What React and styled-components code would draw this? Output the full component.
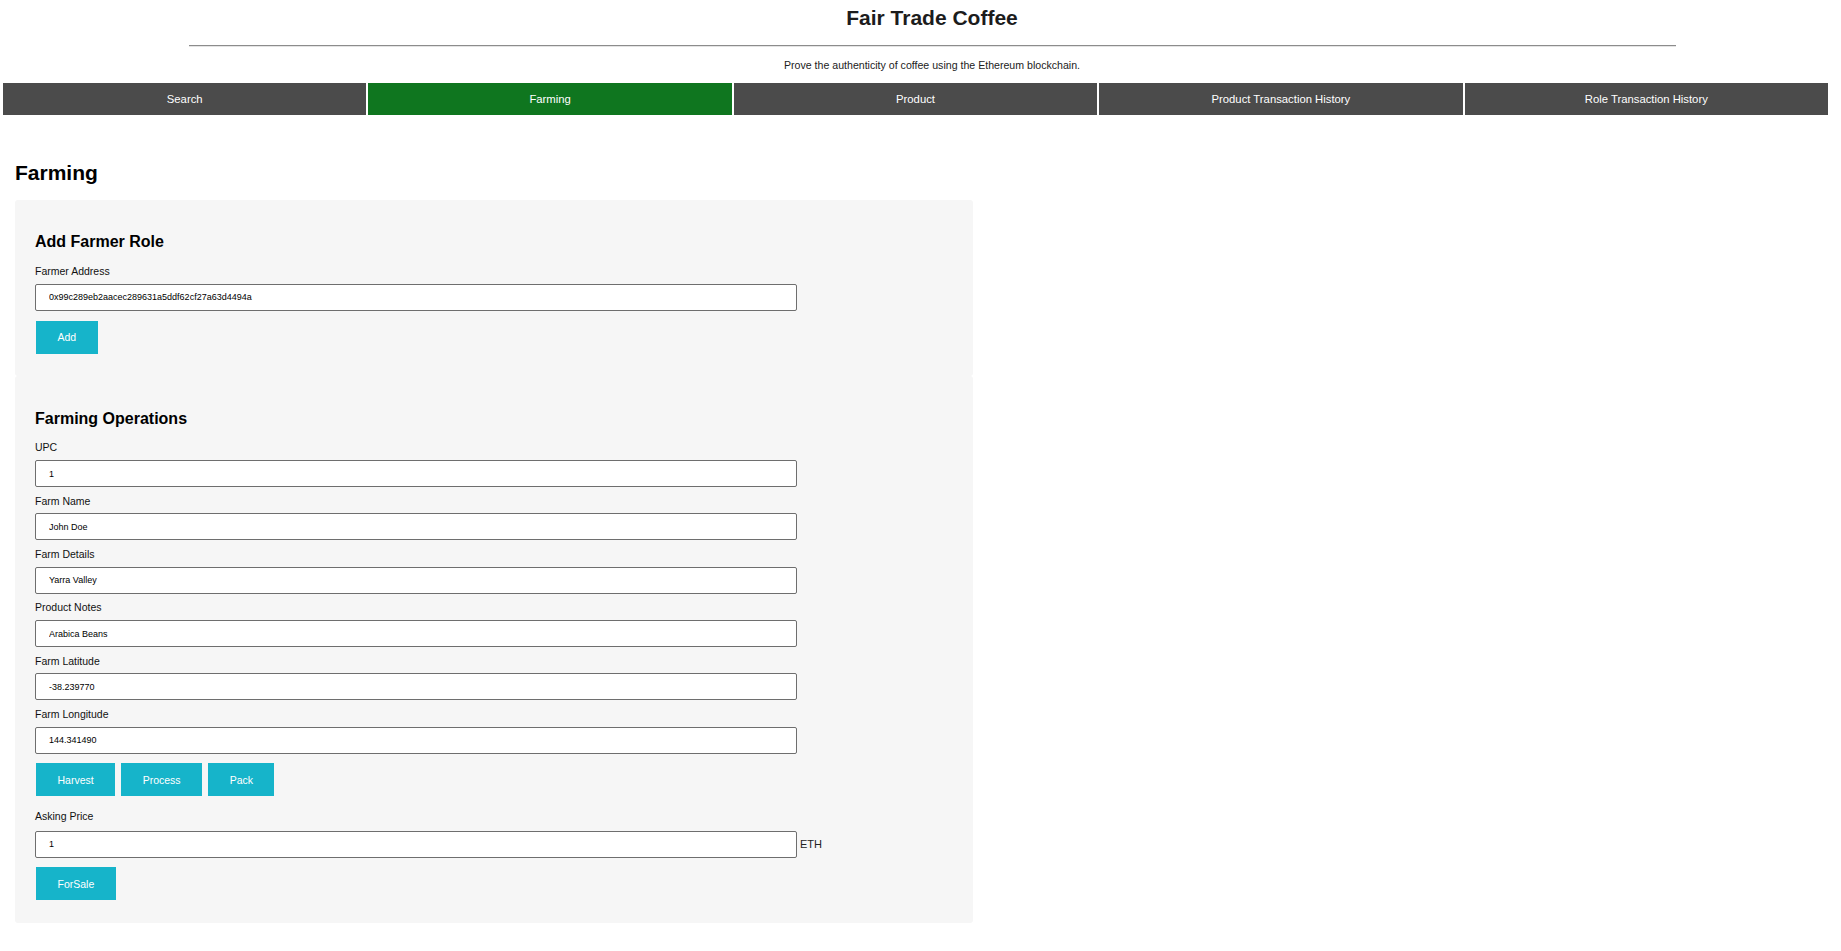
import React from "react";
import styled, { createGlobalStyle } from "styled-components";

const GlobalStyle = createGlobalStyle`
  * {
    box-sizing: border-box;
  }
  body {
    margin: 0;
    background: #fff;
    color: #111;
    font-family: "Liberation Sans", Arial, Helvetica, sans-serif;
  }
`;

const StyledHeader = styled.header`
  padding: 6px 0 0 23px;
  text-align: center;
`;

const StyledTitle = styled.h1`
  margin: 0;
  font-size: 21px;
  line-height: 24px;
  font-weight: 700;
  color: #1c1c1c;
`;

const StyledRule = styled.hr`
  width: 1487px;
  height: 0;
  margin: 15px auto 0;
  border: 0;
  border-top: 1px solid #8c8c8c;
  border-bottom: 1px solid #e4e4e4;
`;

const StyledTagline = styled.p`
  margin: 11.6px 0 0;
  font-size: 10.6px;
  line-height: 12px;
  color: #222;
`;

const StyledNav = styled.nav`
  display: grid;
  grid-template-columns: repeat(5, 1fr);
  gap: 2px;
  width: 1825px;
  margin: 12px 0 0 3px;
`;

const StyledTab = styled.div`
  height: 32.4px;
  display: flex;
  align-items: center;
  justify-content: center;
  font-size: 11.3px;
  color: #fff;
  background-color: ${({ $active }) => ($active ? "#0f761f" : "#4b4b4b")};
`;

const StyledMain = styled.main`
  padding-left: 15px;
`;

const StyledPageTitle = styled.h2`
  margin: 45.7px 0 15.3px;
  font-size: 21px;
  line-height: 24px;
  font-weight: 700;
  color: #000;
`;

const StyledPanel = styled.section`
  width: 958px;
  display: flex;
  flex-direction: column;
  align-items: flex-start;
  padding: 33.5px 20px 22.5px;
  background: #f6f6f6;
  border-radius: 3px;
`;

const StyledPanelTitle = styled.h3`
  margin: 0 0 5.8px;
  font-size: 16px;
  line-height: 18.4px;
  font-weight: 700;
  color: #000;
`;

const StyledField = styled.div`
  display: flex;
  flex-direction: column;
  align-items: flex-start;
  margin-top: ${({ $loose }) => ($loose ? "14.1px" : "7.5px")};
`;

const StyledLabel = styled.label`
  display: block;
  margin-bottom: ${({ $loose }) => ($loose ? "8.2px" : "6.8px")};
  font-size: 10.5px;
  line-height: 12px;
  color: #111;
`;

const StyledInputRow = styled.div`
  display: flex;
  align-items: center;
`;

const StyledInput = styled.input`
  width: 762px;
  height: 27px;
  padding: 0 13px;
  border: 1px solid #6e6e6e;
  border-radius: 2px;
  background: #fff;
  font-family: inherit;
  font-size: 9px;
  color: #000;
  outline: none;
`;

const StyledUnit = styled.span`
  margin-left: 3px;
  font-size: 11px;
  color: #222;
`;

const StyledButtonRow = styled.div`
  display: flex;
  gap: 6px;
  margin: 9.7px 0 0 1px;
`;

const StyledButton = styled.button`
  height: 33px;
  padding: 0 21.5px;
  border: 0;
  border-radius: 0;
  background: #16b4ca;
  color: #fff;
  font-family: inherit;
  font-size: 10.5px;
  cursor: pointer;
`;

const tabs = [
  "Search",
  "Farming",
  "Product",
  "Product Transaction History",
  "Role Transaction History"
];

const farmFields = [
  ["UPC", "1"],
  ["Farm Name", "John Doe"],
  ["Farm Details", "Yarra Valley"],
  ["Product Notes", "Arabica Beans"],
  ["Farm Latitude", "-38.239770"],
  ["Farm Longitude", "144.341490"]
];

const Field = ({ label, value, unit, loose }) => (
  <StyledField $loose={loose}>
    <StyledLabel $loose={loose}>{label}</StyledLabel>
    <StyledInputRow>
      <StyledInput defaultValue={value} />
      {unit && <StyledUnit>{unit}</StyledUnit>}
    </StyledInputRow>
  </StyledField>
);

const App = () => (
  <>
    <GlobalStyle />
    <StyledHeader>
      <StyledTitle>Fair Trade Coffee</StyledTitle>
      <StyledRule />
      <StyledTagline>
        Prove the authenticity of coffee using the Ethereum blockchain.
      </StyledTagline>
    </StyledHeader>
    <StyledNav>
      {tabs.map(tab => (
        <StyledTab key={tab} $active={tab === "Farming"}>
          {tab}
        </StyledTab>
      ))}
    </StyledNav>
    <StyledMain>
      <StyledPageTitle>Farming</StyledPageTitle>
      <StyledPanel>
        <StyledPanelTitle>Add Farmer Role</StyledPanelTitle>
        <Field
          label="Farmer Address"
          value="0x99c289eb2aacec289631a5ddf62cf27a63d4494a"
        />
        <StyledButtonRow>
          <StyledButton>Add</StyledButton>
        </StyledButtonRow>
      </StyledPanel>
      <StyledPanel>
        <StyledPanelTitle>Farming Operations</StyledPanelTitle>
        {farmFields.map(([label, value]) => (
          <Field key={label} label={label} value={value} />
        ))}
        <StyledButtonRow>
          <StyledButton>Harvest</StyledButton>
          <StyledButton>Process</StyledButton>
          <StyledButton>Pack</StyledButton>
        </StyledButtonRow>
        <Field label="Asking Price" value="1" unit="ETH" loose />
        <StyledButtonRow>
          <StyledButton>ForSale</StyledButton>
        </StyledButtonRow>
      </StyledPanel>
    </StyledMain>
  </>
);

export default App;
